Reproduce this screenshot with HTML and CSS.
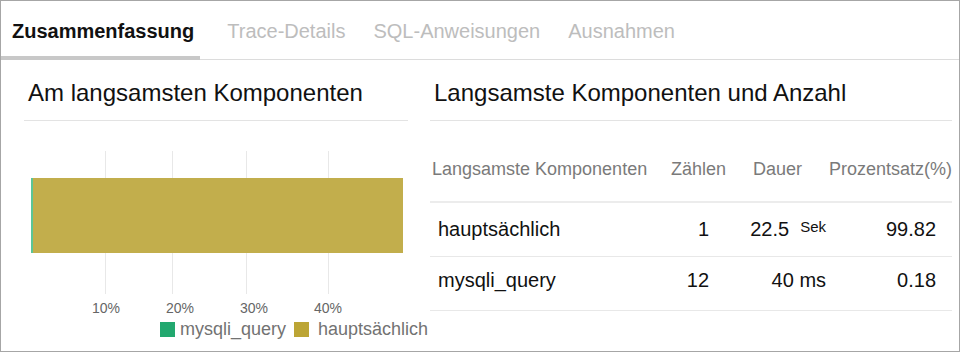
FILE: index.html
```html
<!DOCTYPE html>
<html lang="de">
<head>
    <meta charset="UTF-8">
    <meta name="viewport" content="width=device-width, initial-scale=1.0">
    <title>Trace Zusammenfassung</title>
    <link rel="stylesheet" href="styles.css">
</head>
<body>

    <div class="frame">
        <nav class="tabs">
            <a href="#" class="tab tab-active">Zusammenfassung</a>
            <a href="#" class="tab">Trace-Details</a>
            <a href="#" class="tab">SQL-Anweisungen</a>
            <a href="#" class="tab">Ausnahmen</a>
        </nav>

        <div class="content">
            <section class="panel panel-chart">
                <h2 class="panel-title">Am langsamsten Komponenten</h2>
                <svg class="chart" width="384" height="230" viewBox="0 0 384 230">
                    <g class="chart-grid">
                        <line x1="81.5" y1="30" x2="81.5" y2="173"/>
                        <line x1="148.5" y1="30" x2="148.5" y2="173"/>
                        <line x1="222.5" y1="30" x2="222.5" y2="173"/>
                        <line x1="304.5" y1="30" x2="304.5" y2="173"/>
                    </g>
                    <rect class="bar-main" x="7" y="57" width="372" height="75"/>
                    <rect class="bar-mysql" x="7" y="57" width="2" height="75"/>
                    <g class="chart-axis">
                        <text x="82" y="192">10%</text>
                        <text x="156" y="192">20%</text>
                        <text x="230" y="192">30%</text>
                        <text x="304" y="192">40%</text>
                    </g>
                    <g class="chart-legend">
                        <rect class="key-mysql" x="136" y="201" width="15" height="15"/>
                        <text x="156" y="214">mysqli_query</text>
                        <rect class="key-main" x="270" y="201" width="15" height="15"/>
                        <text x="294" y="214">hauptsächlich</text>
                    </g>
                </svg>
            </section>

            <section class="panel panel-table">
                <h2 class="panel-title">Langsamste Komponenten und Anzahl</h2>
                <div class="table">
                    <div class="table-head">
                        <span>Langsamste Komponenten</span>
                        <span>Zählen</span>
                        <span>Dauer</span>
                        <span>Prozentsatz(%)</span>
                    </div>
                    <div class="table-row">
                        <span>hauptsächlich</span>
                        <span class="num">1</span>
                        <span class="num">22.5<span class="unit">Sek</span></span>
                        <span class="num">99.82</span>
                    </div>
                    <div class="table-row">
                        <span>mysqli_query</span>
                        <span class="num">12</span>
                        <span class="num">40 ms</span>
                        <span class="num">0.18</span>
                    </div>
                </div>
            </section>
        </div>
    </div>

</body>
</html>
```

FILE: styles.css
```css
*{
    padding: 0;
    margin: 0;
    box-sizing: border-box;
}

body {
    font-family: "Liberation Sans", Arial, sans-serif;
    background-color: #fff;
    color: #111;
}

.frame {
    width: 960px;
    height: 352px;
    border: 1px solid #a6a6a6;
    overflow: hidden;
}

/* tabs */
.tabs {
    display: flex;
    height: 59px;
    box-shadow: inset 0 -1px #dcdcdc;
}

.tab {
    padding: 19px 14px 0;
    font-size: 20px;
    line-height: 1.15;
    color: #bdbdbd;
    text-decoration: none;
    white-space: nowrap;
}

.tab-active {
    padding: 19px 6px 0 11px;
    margin-right: 13px;
    font-weight: bold;
    color: #111;
    border-bottom: 4px solid #c8c8c8;
}

/* panels */
.content {
    display: flex;
    gap: 22px;
    padding: 0 10px 0 23px;
}

.panel-chart {
    width: 384px;
}

.panel-table {
    flex: 1;
}

.panel-title {
    font-size: 24px;
    font-weight: normal;
    line-height: 28px;
    padding: 19px 4px 13px;
    border-bottom: 1px solid #e3e3e3;
    white-space: nowrap;
}

/* chart */
.chart {
    display: block;
    overflow: visible;
}

.chart-grid line {
    stroke: #e8e8e8;
    stroke-width: 1;
}

.bar-main {
    fill: #c2ae4c;
}

.bar-mysql {
    fill: #5cc596;
}

.chart-axis text {
    font-family: "Liberation Sans", Arial, sans-serif;
    font-size: 14px;
    fill: #666;
    text-anchor: middle;
}

.chart-legend text {
    font-family: "Liberation Sans", Arial, sans-serif;
    font-size: 18px;
    fill: #727272;
}

.key-mysql {
    fill: #22a86f;
}

.key-main {
    fill: #bca535;
}

/* table */
.table-head {
    display: grid;
    grid-template-columns: 239px 82px 76px 1fr;
    height: 82px;
    padding: 38px 0 0 2px;
    border-bottom: 2px solid #ececec;
    font-size: 18px;
    line-height: 1.15;
    color: #7a7a7a;
    white-space: nowrap;
}

.table-row {
    display: grid;
    grid-template-columns: 1fr 50px 117px 110px;
    align-items: baseline;
    height: 54px;
    padding: 12px 16px 0 8px;
    border-bottom: 1px solid #e8e8e8;
    font-size: 20px;
    line-height: 23px;
    white-space: nowrap;
}

.num {
    text-align: right;
}

.unit {
    font-size: 15px;
    margin-left: 11px;
    vertical-align: 4px;
}
```
